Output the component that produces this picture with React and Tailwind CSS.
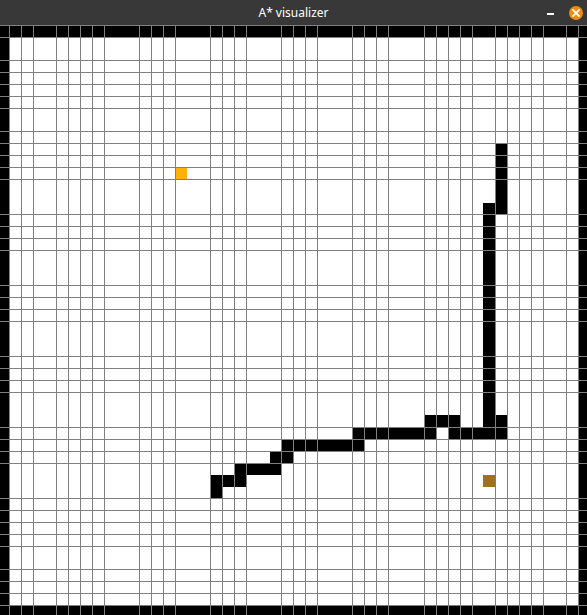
import React from 'react';

// pixel edges of the 50 columns / rows (the screenshot was scaled down, so some grid lines got dropped)
const COL_EDGES = [0, 9, 21, 33, 45, 56, 68, 80, 92, 104, 116, 127, 139, 151, 163, 175, 187, 199, 210, 222, 234, 246, 258, 270, 281, 293, 305, 317, 329, 341, 352, 364, 376, 388, 400, 412, 424, 436, 448, 460, 472, 483, 495, 507, 519, 531, 543, 555, 566, 578, 587];
const ROW_EDGES = [25, 37, 49, 60, 72, 84, 96, 108, 120, 131, 143, 155, 167, 179, 191, 203, 214, 226, 238, 250, 262, 274, 285, 297, 309, 321, 333, 345, 356, 368, 380, 392, 404, 415, 427, 439, 451, 463, 475, 487, 498, 510, 522, 534, 546, 558, 569, 581, 593, 605, 615];
const NO_COL_LINE = new Set([0, 4, 10, 11, 16, 17, 22, 23, 28, 29, 34, 35, 41, 47]);
const NO_ROW_LINE = new Set([2, 8, 14, 15, 20, 21, 26, 27, 32, 33, 38, 39, 45]);

const START = [15, 12];
const END = [41, 38];

const walls = new Set();
const addRun = (row, from, to) => { for (let c = from; c <= to; c++) walls.add(`${c},${row}`); };
const addCol = (col, from, to) => { for (let r = from; r <= to; r++) walls.add(`${col},${r}`); };

addCol(42, 10, 15);
addCol(41, 15, 34);
addCol(42, 33, 34);
addRun(33, 36, 38);
addRun(34, 30, 36);
addRun(34, 38, 40);
addRun(35, 24, 30);
addRun(36, 23, 24);
addRun(37, 20, 23);
addRun(38, 18, 20);
addRun(39, 18, 18);

const sizes = (edges) => edges.slice(1).map((e, i) => `${e - edges[i]}px`).join(' ');

function cellColor(c, r) {
  if (c === START[0] && r === START[1]) return 'bg-[#ffb000]';
  if (c === END[0] && r === END[1]) return 'bg-[#a0701e]';
  if (c === 0 || r === 0 || c === 49 || r === 49) return 'bg-black';
  if (walls.has(`${c},${r}`)) return 'bg-black';
  return 'bg-white';
}

function TitleBar() {
  return (
    <div className="h-[25px] bg-[#383838] grid grid-cols-[1fr_auto_1fr] items-center font-['Noto_Sans',sans-serif]">
      <div />
      <span className="text-white text-[12px] leading-none">A* visualizer</span>
      <div className="flex items-center justify-end gap-[15px] pr-[4px]">
        <div className="w-[7px] h-[2px] bg-white mt-[3px]" />
        <div className="w-[14px] h-[14px] rounded-full bg-[#f08a0c] flex items-center justify-center">
          <svg width="8" height="8" viewBox="0 0 8 8">
            <path d="M1 1 L7 7 M7 1 L1 7" stroke="white" strokeWidth="1.8" strokeLinecap="square" />
          </svg>
        </div>
      </div>
    </div>
  );
}

export default function App() {
  const cells = [];
  for (let r = 0; r < 50; r++) {
    for (let c = 0; c < 50; c++) {
      const left = !NO_COL_LINE.has(c);
      const top = !NO_ROW_LINE.has(r);
      cells.push(
        <div
          key={`${c}-${r}`}
          className={`${cellColor(c, r)} border-[#808080] ${left ? 'border-l' : ''} ${top ? 'border-t' : ''}`}
        />
      );
    }
  }

  return (
    <div className="w-[587px] h-[615px] overflow-hidden bg-white flex flex-col">
      <TitleBar />
      <div
        className="grid"
        style={{ gridTemplateColumns: sizes(COL_EDGES), gridTemplateRows: sizes(ROW_EDGES) }}
      >
        {cells}
      </div>
    </div>
  );
}
